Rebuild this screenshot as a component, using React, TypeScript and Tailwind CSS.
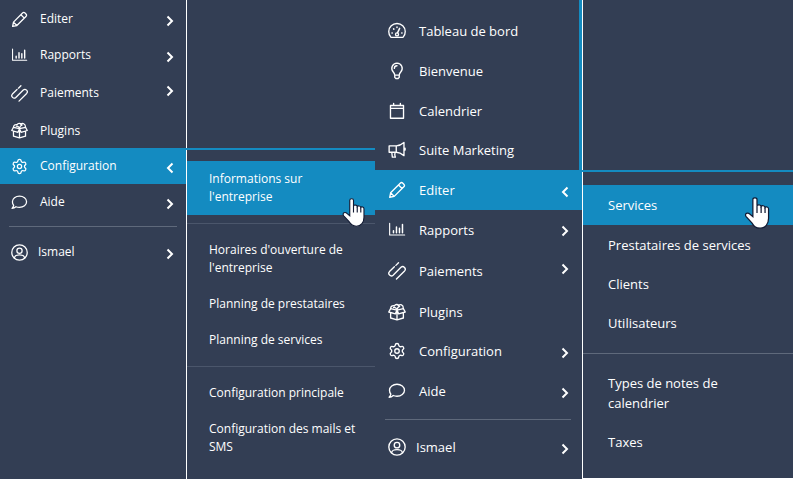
import type { ReactNode } from "react";
import { Settings } from "lucide-react";
import clsx from "clsx";

type Item = {
    label: string;
    icon: ReactNode;
    height: string;
    arrow?: "left" | "right";
    raised?: boolean;
};

function Icon({ children }: { children: ReactNode }) {
    return (
        <svg viewBox="0 0 24 24" className="w-full" fill="none" stroke="currentColor" strokeWidth="1.800" strokeLinecap="round" strokeLinejoin="round" aria-hidden="true">
            {children}
        </svg>
    );
}

const gauge = (
    <Icon>
        <path d="M4 20.500A11 11 0 1 1 20 20.500Z" />
        <circle cx="12" cy="16.500" r="2" />
        <path d="M12.800 14.200 15.500 8.500M5.300 14.500h.4M7.500 9.200l.3.300M12 6.800v.4M18.300 14.500h.4" strokeWidth="2" />
    </Icon>
);

const bulb = (
    <Icon>
        <path d="M12 1.500a7 7 0 0 0-5 11.800c1.300 1.500 2 2.600 2 4.200v3l1.500 1.500h3l1.500-1.500v-3c0-1.600.7-2.700 2-4.200A7 7 0 0 0 12 1.500ZM9 17.500h6M8.500 8.500A3.500 3.500 0 0 1 12 5" />
    </Icon>
);

const calendar = (
    <Icon>
        <path d="M3.300 4.700h17.400v17H3.300ZM3.300 8.500h17.400M7.500 1.800v2.900M16.500 1.800v2.900" />
    </Icon>
);

const bullhorn = (
    <Icon>
        <path d="M1.500 6.500h9.500v8.500H1.500ZM11 6.500c4 0 7-1.700 10.300-4.500v17.500c-3.300-2.800-6.300-4.500-10.300-4.500M5 15l.8 6.500h4L9 18.500 9.500 15M22.800 9.500v2.500" />
    </Icon>
);

const pencil = (
    <Icon>
        <path d="M2.300 21.700l1.200-6L16.300 2.900a2.500 2.500 0 0 1 3.500 0l1.300 1.300a2.500 2.500 0 0 1 0 3.500L8.300 20.500ZM14 5.200l4.800 4.800M3.500 15.700l4.800 4.800" />
    </Icon>
);

const chart = (
    <Icon>
        <path d="M2.200 3v15.700h20" strokeWidth="1.500" />
        <path d="M7.300 13v2.500M11.300 8v7.500M15.300 9.500v6M19.300 4.500v11" strokeWidth="2" />
    </Icon>
);

const clip = (
    <Icon>
        <path d="M10.500 4.500 14 1M8.500 6.300 2 12.800a3.400 3.400 0 0 0 4.800 4.800L17.300 7.100a3.400 3.400 0 0 1 4.800 4.800L11.300 22.700" />
    </Icon>
);

const gift = (
    <Icon>
        <path d="M3.500 14v6l8.500 2.500 8.500-2.500v-6M12 10v12M1 12l2.500-4.500L12 9.500 9.800 14.500ZM23 12l-2.500-4.500L12 9.500l2.200 5Z" />
        <path d="M3.500 7.500C3.500 4.500 6 3 8.500 3.800 10 1.500 13 1.500 14 3.500c2-2.500 6.500-1.500 6.500 4M12 9C11 6.500 9.500 5.500 7.500 6M12 9c.5-2.500 1.500-4 3.500-4.500" />
    </Icon>
);

const cog = <Settings className="h-auto w-full" strokeWidth={1.8} aria-hidden="true" />;

const bubble = (
    <Icon>
        <path d="M12 3c5.500 0 10 3.400 10 8s-4.500 8-10 8c-1.800 0-3.500-.3-5-1-1.500 1.400-3.500 2.300-5.500 2.300 1.200-1.200 2-2.600 2.300-4.100C2.700 14.800 2 13 2 11c0-4.600 4.500-8 10-8Z" />
    </Icon>
);

const user = (
    <Icon>
        <circle cx="12" cy="12" r="10.900" />
        <circle cx="12" cy="9.500" r="3.700" />
        <path d="M4.800 19.500c.7-3.200 2.200-4 7.200-4s6.500.8 7.200 4" />
    </Icon>
);

function Chevron({ to }: { to: "left" | "right" }) {
    return (
        <svg viewBox="0 0 8 12" className="h-3 w-2 shrink-0" fill="none" stroke="currentColor" strokeWidth="2" aria-hidden="true">
            <path d={to === "left" ? "M6.500 1.500 2 6l4.500 4.500" : "M1.500 1.500 6 6l-4.500 4.500"} />
        </svg>
    );
}

function Hand({ className }: { className: string }) {
    return (
        <svg viewBox="0 0 24 31" className={clsx("pointer-events-none absolute", className)} aria-hidden="true">
            <path
                d="M8 2.500C8 .3 12 .3 12 2.500V8.500c.6-1.500 3.800-1.200 4 .6.800-1.200 3.600-.8 3.800 1 .8-1 3.400-.6 3.400 1.400v9c0 5.500-3 9.700-8.200 9.700-4.500 0-6-2-8-5.200L1.500 19C-.5 16 3 14.500 5 16.500l3 2.500Z"
                fill="white"
                stroke="#111a33"
                strokeWidth="1.200"
            />
            <path d="M12 8.500v7M16 9.100v6.400M19.800 10.100v5.400" fill="none" stroke="#111a33" strokeWidth="1.200" />
        </svg>
    );
}

function MenuItem({ item, small, active, account }: { item: Item; small?: boolean; active?: boolean; account?: boolean }) {
    return (
        <li>
            <button
                type="button"
                className={clsx(
                    "flex w-full items-center text-left",
                    item.height,
                    small ? "pr-3 pl-[11px]" : "pr-[13px] pl-[13px]",
                    active && "bg-[#148bc1]",
                )}
            >
                <span className={clsx("shrink-0", small ? "w-[17px]" : "w-[18px]")}>{item.icon}</span>
                <span className={clsx("flex-1", account ? "pl-[10px]" : small ? "pl-3" : "pl-[13px]")}>{item.label}</span>
                {item.arrow && (
                    <span className={item.raised ? "pb-1" : "pt-[3px]"}>
                        <Chevron to={item.arrow} />
                    </span>
                )}
            </button>
        </li>
    );
}

function SubItem({ label, className, children }: { label: string; className: string; children?: ReactNode }) {
    return (
        <li className="relative">
            <a href="#" className={clsx("block", className)}>
                {label}
            </a>
            {children}
        </li>
    );
}

const leftItems: Item[] = [
    { label: "Editer", icon: pencil, height: "h-9", arrow: "right" },
    { label: "Rapports", icon: chart, height: "h-9", arrow: "right" },
    { label: "Paiements", icon: clip, height: "h-10", arrow: "right", raised: true },
    { label: "Plugins", icon: gift, height: "h-[35px]" },
    { label: "Configuration", icon: cog, height: "h-9", arrow: "left" },
    { label: "Aide", icon: bubble, height: "h-9", arrow: "right" },
];

const topItems: Item[] = [
    { label: "Tableau de bord", icon: gauge, height: "h-10" },
    { label: "Bienvenue", icon: bulb, height: "h-10" },
    { label: "Calendrier", icon: calendar, height: "h-[39px]" },
    { label: "Suite Marketing", icon: bullhorn, height: "h-10" },
];

const mainItems: Item[] = [
    { label: "Editer", icon: pencil, height: "h-10", arrow: "left" },
    { label: "Rapports", icon: chart, height: "h-[39px]", arrow: "right" },
    { label: "Paiements", icon: clip, height: "h-[43px]", arrow: "right", raised: true },
    { label: "Plugins", icon: gift, height: "h-[39px]" },
    { label: "Configuration", icon: cog, height: "h-10", arrow: "right" },
    { label: "Aide", icon: bubble, height: "h-10", arrow: "right" },
];

const smallItem = "py-[9px] pr-3 pl-[22px]";
const largeItem = "pt-[10px] pb-[9px] pr-16 pl-[25px]";

export default function App() {
    return (
        <div className="grid min-h-screen grid-cols-[minmax(0,186fr)_minmax(0,189fr)_minmax(0,207fr)_minmax(0,211fr)] bg-[#333e54] font-['Open_Sans',sans-serif] text-white">
            <nav aria-label="Menu configuration" className="text-[12px] leading-[18px]">
                <ul className="pt-px">
                    {leftItems.map((item) => (
                        <MenuItem key={item.label} item={item} small active={item.arrow === "left"} />
                    ))}
                </ul>
                <hr className="mx-[9px] mt-[6px] mb-[7px] border-[#5f697b]" />
                <ul>
                    <MenuItem item={{ label: "Ismael", icon: user, height: "h-9", arrow: "right" }} small account />
                </ul>
            </nav>

            <div className="flex flex-col text-[12px] leading-[18px]">
                <div className="h-[148px] border-l border-white" />
                <div className="h-[2px] bg-[#148bc1]" />
                <nav aria-label="Configuration" className="flex-1 border-l border-white pt-[11px]">
                    <ul>
                        <SubItem label="Informations sur l'entreprise" className="bg-[#148bc1] py-[9px] pr-12 pl-[22px]">
                            <Hand className="top-[37px] right-[10px] h-[29px] w-[23px]" />
                        </SubItem>
                    </ul>
                    <hr className="my-2 border-[#4b566b]" />
                    <ul>
                        <SubItem label="Horaires d'ouverture de l'entreprise" className={smallItem} />
                        <SubItem label="Planning de prestataires" className={smallItem} />
                        <SubItem label="Planning de services" className={smallItem} />
                    </ul>
                    <hr className="my-2 border-[#4b566b]" />
                    <ul>
                        <SubItem label="Configuration principale" className={smallItem} />
                        <SubItem label="Configuration des mails et SMS" className={smallItem} />
                    </ul>
                </nav>
            </div>

            <nav aria-label="Menu principal" className="text-[13px] leading-5 font-medium">
                <ul className="border-r-[3px] border-[#148bc1] pt-[11px]">
                    {topItems.map((item) => (
                        <MenuItem key={item.label} item={item} />
                    ))}
                </ul>
                <ul>
                    {mainItems.map((item) => (
                        <MenuItem key={item.label} item={item} active={item.arrow === "left"} />
                    ))}
                </ul>
                <hr className="mt-2 mr-[11px] mb-[7px] ml-[10px] border-[#5f697b]" />
                <ul>
                    <MenuItem item={{ label: "Ismael", icon: user, height: "h-10", arrow: "right" }} account />
                </ul>
            </nav>

            <div className="flex flex-col text-[13px] leading-5 font-medium">
                <div className="h-[170px] border-l border-white" />
                <div className="h-[2px] bg-[#148bc1]" />
                <nav aria-label="Editer" className="flex-1 border-b border-l border-white pt-[13px]">
                    <ul>
                        <SubItem label="Services" className="bg-[#148bc1] py-[10px] pr-16 pl-[25px]">
                            <Hand className="top-3 right-[23px] h-8 w-[26px]" />
                        </SubItem>
                        <SubItem label="Prestataires de services" className={clsx(largeItem, "whitespace-nowrap")} />
                        <SubItem label="Clients" className={largeItem} />
                        <SubItem label="Utilisateurs" className={largeItem} />
                    </ul>
                    <hr className="mt-[11px] mb-[9px] border-[#5f697b]" />
                    <ul>
                        <SubItem label="Types de notes de calendrier" className={largeItem} />
                        <SubItem label="Taxes" className={largeItem} />
                    </ul>
                </nav>
            </div>
        </div>
    );
}
